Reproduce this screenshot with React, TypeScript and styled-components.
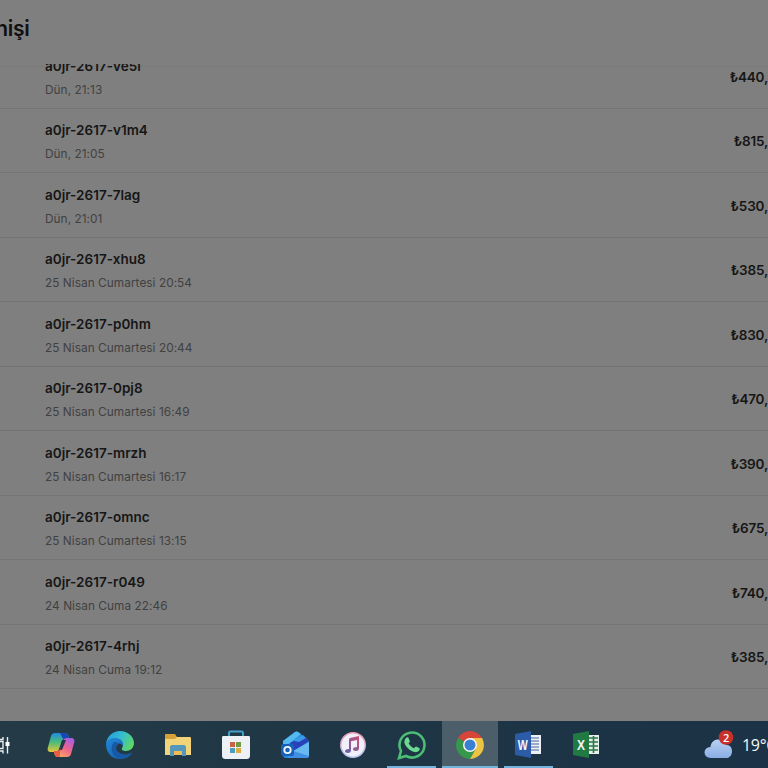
import React from "react";
import styled, { createGlobalStyle } from "styled-components";

const GlobalStyle = createGlobalStyle`
  * {
    box-sizing: border-box;
  }

  body {
    margin: 0;
    overflow: hidden;
    background: #7f7f7f;
    font-family: Inter, "Liberation Sans", sans-serif;
  }
`;

// Styled Components
const Screen = styled.div`
  display: flex;
  flex-direction: column;
  width: 768px;
  height: 768px;
  overflow: hidden;
  background: #7f7f7f;
`;

const Header = styled.header`
  display: flex;
  flex: none;
  justify-content: flex-end;
  width: 29.5px;
  height: 64px;
  padding-top: 15px;
`;

const Title = styled.h1`
  margin: 0;
  font-size: 21px;
  font-weight: 600;
  line-height: 27px;
  letter-spacing: -0.3px;
  white-space: nowrap;
  color: #101010;
`;

const List = styled.main`
  display: flex;
  flex: 1;
  flex-direction: column;
  justify-content: flex-end;
  min-height: 0;
  padding-bottom: 32px;
  overflow: hidden;
  background: linear-gradient(#7f7f7f 2px, #797979 2px, #797979 3px, #7f7f7f 3px);
`;

const Row = styled.div`
  display: flex;
  flex: none;
  align-items: center;
  justify-content: space-between;
  height: 64.5px;
  padding-top: 1.6px;
  padding-left: 45px;
  border-bottom: 1px solid #747474;
`;

const OrderCode = styled.div`
  font-size: 13.5px;
  font-weight: 600;
  line-height: 20px;
  letter-spacing: 0.02px;
  color: #161616;
`;

const OrderDate = styled.div`
  margin-top: 6px;
  font-size: 11.8px;
  line-height: 16px;
  letter-spacing: 0.06px;
  color: #414141;
`;

const Amount = styled.div`
  font-size: 13.5px;
  font-weight: 600;
  letter-spacing: -0.2px;
  color: #161616;
`;

const Taskbar = styled.footer`
  display: flex;
  flex: none;
  height: 47px;
  background: linear-gradient(90deg, #243b47, #1d3545 55%, #1c3246);
`;

const TaskView = styled.div`
  display: flex;
  align-items: center;
  width: 32px;
`;

const TaskItem = styled.div<{ $active?: boolean; $running?: boolean }>`
  display: flex;
  align-items: center;
  justify-content: center;
  width: 58.4px;
  background: ${({ $active }) => ($active ? "#4b5e69" : "transparent")};
  background-clip: content-box;
  padding: 0 1px;
  position: relative;

  &::after {
    content: "";
    position: absolute;
    bottom: 0;
    left: ${({ $active }) => ($active ? 1 : 5)}px;
    right: ${({ $active }) => ($active ? 1 : 5)}px;
    height: 2px;
    background: ${({ $active, $running }) =>
      $active || $running ? "#72b4de" : "transparent"};
  }
`;

const Weather = styled.div`
  display: flex;
  align-items: center;
  gap: 7px;
  width: 65px;
  margin-left: auto;
  font-family: "Open Sans", "Noto Sans", sans-serif;
  font-size: 16px;
  letter-spacing: -0.3px;
  white-space: nowrap;
  color: #f4f7f9;

  svg {
    flex: none;
  }
`;

const TaskViewIcon = () => (
  <svg width="12" height="24" viewBox="0 0 12 24" fill="none" stroke="#e8eef0">
    <path d="M0 8.5h3v7H0M-1 4v2.5h4V4M-1 20.5v-2.5h4v2.5M7.5 4v16.5" strokeWidth="1.4" />
    <path d="M5.5 9h4v4h-4z" fill="#fff" stroke="none" />
  </svg>
);

const CopilotIcon = () => (
  <svg width="28" height="28" viewBox="0 0 28 28">
    <defs>
      <linearGradient id="copLeft" x1="0" y1="0" x2="0" y2="1">
        <stop stopColor="#1d8de0" />
        <stop offset=".5" stopColor="#4fbd78" />
        <stop offset="1" stopColor="#e9c538" />
      </linearGradient>
      <linearGradient id="copRight" x1=".8" y1="0" x2=".2" y2="1">
        <stop stopColor="#a65ce8" />
        <stop offset=".5" stopColor="#ed658b" />
        <stop offset="1" stopColor="#ffac62" />
      </linearGradient>
    </defs>
    <path d="M8 2h10c2 0 3 1 3.5 3L22 8h-4c-2 0-3 1-3.6 3L12 18c-.7 2-2 3-4 3H4c-3 0-4-2-3-5L4 5c.6-2 2-3 4-3z" fill="url(#copLeft)" />
    <path d="M13 2h5c2 0 3 1 3.5 3L22 8h-6z" fill="#1948b5" />
    <path d="M20 26H11c-2 0-3-1-3.5-3L7 20h3c2 0 3-1 3.6-3L16 10c.7-2 2-3 4-3h4c3 0 4 2 3 5l-3 11c-.6 2-2 3-4 3z" fill="url(#copRight)" />
    <path d="M15 9h4l-4 10h-3l1.6-3z" fill="#293650" />
    <path d="M11 26c-2 0-3-1-3.5-3L7 20h3c2 0 3-1 3.6-3l-1 9z" fill="#e95b43" />
  </svg>
);

const EdgeIcon = () => (
  <svg width="30" height="30" viewBox="0 0 30 30">
    <defs>
      <linearGradient id="edgeTop" x1="0" y1=".2" x2="1" y2=".6">
        <stop stopColor="#239ddb" />
        <stop offset=".5" stopColor="#35bdd0" />
        <stop offset="1" stopColor="#60d761" />
      </linearGradient>
      <linearGradient id="edgeBase" x1="0" y1="0" x2="1" y2="1">
        <stop stopColor="#2186d8" />
        <stop offset="1" stopColor="#155ca8" />
      </linearGradient>
    </defs>
    <path d="M1 14C2 6 8 1 15 1c8 0 14 6 14 12 0 5-4 8-8 8-3 0-5-1-4-3 3-4-1-8-6-8-4 0-8 2-10 4z" fill="url(#edgeTop)" />
    <path d="M1 14c1-4 5-6 9-6 6 0 9 4 8 8-1-2-3-3-5-2-5 4-1 10 5 11 4 1 7-1 9-3-2 5-7 7-12 7C7 29 1 23 1 14z" fill="url(#edgeBase)" />
    <path d="M9 12c-5 6-2 15 6 17 5 0 10-2 12-7-3 2-6 3-9 2-6-1-9-6-5-10-1-2-2-2-4-2z" fill="#1759a5" />
  </svg>
);

const ExplorerIcon = () => (
  <svg width="28" height="24" viewBox="0 0 28 24">
    <path d="M1 2c0-1 .5-1 1-1h9l2 3h13l1 1v17H1z" fill="#d5a038" />
    <path d="M1 6h10l2-2h13l1 1v17H1z" fill="#f3d377" />
    <path d="M6 23v-9c0-1 1-2 2-2h12c1 0 2 1 2 2v9h-4v-5h-8v5z" fill="#5596bb" />
    <path d="M10 18h8v4h-8z" fill="#eebd54" />
  </svg>
);

const StoreIcon = () => (
  <svg width="28" height="30" viewBox="0 0 28 30">
    <path d="M7 8V3c0-1 .5-1.5 1.5-1.5h11c1 0 1.5.5 1.5 1.5v5" fill="none" stroke="#429fc7" strokeWidth="2" />
    <path d="M0 7.5c0-1 .5-1.5 1.5-1.5h25c1 0 1.5.5 1.5 1.5V25c0 3-1 4-4 4H4c-3 0-4-1-4-4z" fill="#edf0f4" />
    <path d="M8 12h5v5H8z" fill="#ca6045" />
    <path d="M14 12h5v5h-5z" fill="#719944" />
    <path d="M8 18h5v5H8z" fill="#4a9ebb" />
    <path d="M14 18h5v5h-5z" fill="#dcac43" />
  </svg>
);

const OutlookIcon = () => (
  <svg width="28" height="28" viewBox="0 0 28 28">
    <path d="M2 10 14 1c1-.8 2-.8 3 0l9 7c1 1 2 2 2 3v13c0 2-1 3-3 3H5c-2 0-3-1-3-3z" fill="#278ce0" />
    <path d="m2 10 12-9c1-.8 2-.8 3 0l3 2L5 15H2z" fill="#55b9ef" />
    <path d="m13 9 9-5 4 4-9 5z" fill="#3b9ae6" />
    <path d="m9 12 4-2 5 1 7-4 3 3-15 10z" fill="#2942b9" />
    <path d="m12 20 16-9v13c0 2-1 3-3 3H7z" fill="#68b9ef" />
    <path d="m12 20 16 5c-.5 1.5-1.5 2-3 2H7z" fill="#418ee5" />
    <rect y="13" width="13" height="12" rx="2" fill="#1762b8" />
    <circle cx="6.5" cy="19" r="3.2" fill="none" stroke="#f1f8ff" strokeWidth="1.8" />
  </svg>
);

const MusicIcon = () => (
  <svg width="26" height="26" viewBox="0 0 26 26">
    <defs>
      <linearGradient id="musicRing" x1="0" y1="0" x2="0" y2="1">
        <stop stopColor="#f19aad" />
        <stop offset="1" stopColor="#b5c7f4" />
      </linearGradient>
      <linearGradient id="musicNote" x1="1" y1="0" x2="0" y2="1">
        <stop stopColor="#d34c73" />
        <stop offset="1" stopColor="#5368ad" />
      </linearGradient>
    </defs>
    <circle cx="13" cy="13" r="12.2" fill="#f1effa" stroke="url(#musicRing)" strokeWidth="1.5" />
    <path d="m10 6 9-2v12c0 2-1 3-3 3s-3-1-3-2 1-2 4-2V8l-6 1.3V18c0 2-1 3-3 3s-3-1-3-2 1-2 4-2V7z" fill="url(#musicNote)" />
  </svg>
);

const WhatsAppIcon = () => (
  <svg width="30" height="30" viewBox="0 0 30 30">
    <path d="m2 28 2-7a12.5 12.5 0 1 1 5 5z" fill="none" stroke="#4bbd74" strokeWidth="2.6" />
    <path d="M9 8c1-1 2-1 2.6 0l1.2 3c.2.8-.3 1.4-1.2 2.3 1.4 2.5 3.1 4 5.6 5 .8-1 1.4-1.9 2-1.7l3 1.4c1 .4.5 2.2-.4 3.1-1.5 1.4-3.7 1.3-6 .4-4-1.5-8-6-8.4-9-.1-2 .6-3.6 1.6-4.5z" fill="#6bd892" />
  </svg>
);

const ChromeIcon = () => (
  <svg width="30" height="30" viewBox="0 0 30 30">
    <path d="M15 15 2.9 8A14 14 0 0 1 27.1 8z" fill="#d9443a" />
    <path d="M15 15 2.9 8A14 14 0 0 0 15 29l6-10.5z" fill="#36984b" />
    <path d="M15 8h12.1A14 14 0 0 1 15 29l6-10.5z" fill="#edc344" />
    <circle cx="15" cy="15" r="7" fill="#f4f5f4" />
    <circle cx="15" cy="15" r="5.5" fill="#397fd2" />
  </svg>
);

const OfficeText = styled.text`
  font-family: "Liberation Sans", sans-serif;
  font-size: 15px;
  font-weight: 700;
  fill: #f3f6f8;
`;

const WordIcon = () => (
  <svg width="27" height="27" viewBox="0 0 27 27">
    <path d="M14 4h12v19H14z" fill="#edf1f7" />
    <path d="M15 7h9M15 10h9M15 13h9M15 16h9M15 19h9" stroke="#45699e" />
    <path d="m0 3 16-3v27L0 24z" fill="#2c5ba8" />
    <OfficeText x="2.8" y="19" textLength="10" lengthAdjust="spacingAndGlyphs">W</OfficeText>
  </svg>
);

const ExcelIcon = () => (
  <svg width="27" height="27" viewBox="0 0 27 27">
    <path d="M14 4h12v19H14z" fill="#e4efe8" />
    <path d="M16 7h9M16 11h9M16 15h9M16 19h9M20.5 5v17" stroke="#2c7548" strokeWidth="1.6" />
    <path d="m0 3 16-3v27L0 24z" fill="#207a42" />
    <OfficeText x="4" y="19" textLength="8" lengthAdjust="spacingAndGlyphs">X</OfficeText>
  </svg>
);

const WeatherIcon = () => (
  <svg width="32" height="32" viewBox="0 0 32 32">
    <defs>
      <linearGradient id="cloud" x1="0" y1="0" x2="0" y2="1">
        <stop stopColor="#b9d0f2" />
        <stop offset="1" stopColor="#8baee4" />
      </linearGradient>
    </defs>
    <path d="M8 29c-9 0-8-11-.5-11C8 9 20 8 23 16c8-1 8 13 0 13z" fill="url(#cloud)" />
    <circle cx="23" cy="8.5" r="7.3" fill="#c9302b" />
    <text x="23" y="12.5" textAnchor="middle" fontSize="11" fontWeight="600" fill="#fff">2</text>
  </svg>
);

const orders = [
  { code: "a0jr-2617-ve5l", date: "Dün, 21:13", amount: "₺440," },
  { code: "a0jr-2617-v1m4", date: "Dün, 21:05", amount: "₺815," },
  { code: "a0jr-2617-7lag", date: "Dün, 21:01", amount: "₺530," },
  { code: "a0jr-2617-xhu8", date: "25 Nisan Cumartesi 20:54", amount: "₺385," },
  { code: "a0jr-2617-p0hm", date: "25 Nisan Cumartesi 20:44", amount: "₺830," },
  { code: "a0jr-2617-0pj8", date: "25 Nisan Cumartesi 16:49", amount: "₺470," },
  { code: "a0jr-2617-mrzh", date: "25 Nisan Cumartesi 16:17", amount: "₺390," },
  { code: "a0jr-2617-omnc", date: "25 Nisan Cumartesi 13:15", amount: "₺675," },
  { code: "a0jr-2617-r049", date: "24 Nisan Cuma 22:46", amount: "₺740," },
  { code: "a0jr-2617-4rhj", date: "24 Nisan Cuma 19:12", amount: "₺385," },
];

const App: React.FC = () => {
  return (
    <>
      <GlobalStyle />
      <Screen>
        <Header>
          <Title>nişi</Title>
        </Header>
        <List>
          {orders.map((order) => (
            <Row key={order.code}>
              <div>
                <OrderCode>{order.code}</OrderCode>
                <OrderDate>{order.date}</OrderDate>
              </div>
              <Amount>{order.amount}</Amount>
            </Row>
          ))}
        </List>
        <Taskbar>
          <TaskView><TaskViewIcon /></TaskView>
          <TaskItem><CopilotIcon /></TaskItem>
          <TaskItem><EdgeIcon /></TaskItem>
          <TaskItem><ExplorerIcon /></TaskItem>
          <TaskItem><StoreIcon /></TaskItem>
          <TaskItem><OutlookIcon /></TaskItem>
          <TaskItem><MusicIcon /></TaskItem>
          <TaskItem $running><WhatsAppIcon /></TaskItem>
          <TaskItem $active><ChromeIcon /></TaskItem>
          <TaskItem $running><WordIcon /></TaskItem>
          <TaskItem><ExcelIcon /></TaskItem>
          <Weather>
            <WeatherIcon />
            <span>19°C</span>
          </Weather>
        </Taskbar>
      </Screen>
    </>
  );
};

export default App;
